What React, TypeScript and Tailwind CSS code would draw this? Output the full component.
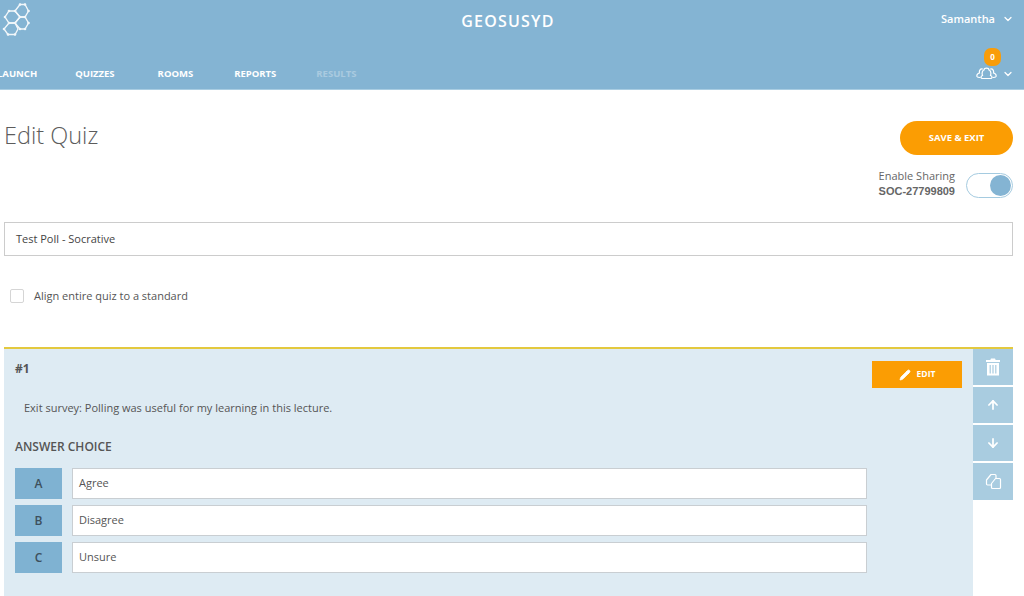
import { ChevronDown, Pencil, ArrowUp, ArrowDown } from "lucide-react";

const Logo = () => (
  <svg width="30" height="38" viewBox="0 0 30 38" fill="none" stroke="white" strokeWidth="1.3" className="opacity-90">
    <path d="M15 11 L20 4.5 L25 4.5 L28.5 11 L25 17 L20 17 Z" />
    <path d="M20 17 L25 17 L28.5 23 L25 29 L20 29 L15 23 Z" />
    <path d="M15 11 L20 17 L15 23 L9 23 L5 17 L9 11 Z" />
    <path d="M9 23 L15 23 L18 29 L15 34.5 L8 34.5 L4 29 Z" />
    {[[20,4.5],[25,4.5],[28.5,11],[28.5,23],[25,17],[20,17],[15,11],[9,11],[5,17],[15,23],[9,23],[4,29],[8,34.5],[15,34.5],[20,29],[25,29]].map(([x, y], i) => (
      <circle key={i} cx={x} cy={y} r="1.3" fill="white" stroke="none" />
    ))}
  </svg>
);

const CloudPeople = () => (
  <svg width="21" height="14" viewBox="0 0 21 14" fill="none" stroke="white" strokeWidth="1.2" strokeLinecap="round">
    <path d="M6.5 12.5 C4.5 12.5 4.5 10 6.5 9.5 C5.5 7 6.5 4.5 8 4 C8 1.5 13 1.5 13 4 C14.5 4.5 15.5 7 14.5 9.5 C16.5 10 16.5 12.5 14.5 12.5 Z" />
    <path d="M6.5 3 C4 2.5 3 5 3.5 7 C1.5 7.5 0.5 9 1 10.5 C1.5 11.5 2.5 11.5 4 11.5" />
    <path d="M14.5 3 C17 2.5 18 5 17.5 7 C19.5 7.5 20.5 9 20 10.5 C19.5 11.5 18.5 11.5 17 11.5" />
  </svg>
);

const TrashIcon = () => (
  <svg width="16" height="18" viewBox="0 0 16 18" fill="white">
    <path d="M6 0.5 H10 L10.7 2 H15 V4 H1 V2 H5.3 Z" />
    <path fillRule="evenodd" d="M2 5 H14 V17.5 H2 Z M4.6 7 V15.5 H5.8 V7 Z M7.4 7 V15.5 H8.6 V7 Z M10.2 7 V15.5 H11.4 V7 Z" />
  </svg>
);

const CopyIcon = () => (
  <svg width="17" height="17" viewBox="0 0 17 17" fill="none" stroke="white" strokeWidth="1.2" strokeLinejoin="round">
    <path d="M6 12 H2.5 C2 12 1.5 11.5 1.5 11 V7 L6 1.5 H10 C10.5 1.5 11 2 11 2.5 V5.5" />
    <path d="M10.5 5.5 H14.5 C15 5.5 15.5 6 15.5 6.5 V14.5 C15.5 15 15 15.5 14.5 15.5 H7.5 C7 15.5 6.5 15 6.5 14.5 V10.5 Z" />
  </svg>
);

const answers = [
  { key: "A", text: "Agree" },
  { key: "B", text: "Disagree" },
  { key: "C", text: "Unsure" },
];

const App = () => {
  return (
    <div className="h-[596px] w-[1024px] overflow-hidden bg-white font-['Open_Sans',sans-serif] text-[#555]">
      <header className="h-[90px] border-b border-[#a9cde2] bg-[#84b4d3] text-white">
        <div className="flex h-[45px] items-start justify-between pr-[10px]">
          <div className="w-[120px]">
            <Logo />
          </div>
          <div className="mt-[9px] ml-[2px] text-[16px] leading-[24px] font-semibold tracking-[1.2px]">GEOSUSYD</div>
          <div className="mt-[10px] flex w-[120px] items-center justify-end gap-[7px] text-[11px] leading-[18px] font-semibold">
            Samantha
            <ChevronDown size={12} strokeWidth={2.5} />
          </div>
        </div>
        <div className="flex h-[44px] items-start justify-between pr-[10px]">
          <nav className="mt-[21px] -ml-[3px] flex gap-[40px] text-[9.5px] leading-[16px] font-bold">
            <span>LAUNCH</span>
            <span className="-ml-[2px]">QUIZZES</span>
            <span className="ml-[3px]">ROOMS</span>
            <span className="ml-[1px]">REPORTS</span>
            <span className="opacity-30">RESULTS</span>
          </nav>
          <div className="relative mt-[20px] flex items-center gap-[5px]">
            <CloudPeople />
            <ChevronDown size={12} strokeWidth={2.5} className="mt-[3px]" />
            <span className="absolute -top-[17px] left-[8px] flex h-[18px] w-[17px] items-center justify-center rounded-[7px] bg-[#f99d0a] text-[8px] font-bold">0</span>
          </div>
        </div>
      </header>

      <main className="pr-[11px] pl-[4px]">
        <div className="flex items-start justify-between pt-[31px]">
          <h1 className="-mt-[1px] text-[23.5px] leading-[30px] font-light text-[#5c5c5c]">Edit Quiz</h1>
          <div className="flex flex-col items-end">
            <button className="h-[34px] w-[113px] rounded-full bg-[#fb9d03] text-[9.5px] font-bold text-white">SAVE &amp; EXIT</button>
            <div className="mt-[16px] flex items-center gap-[11px]">
              <div className="-mt-[3px] text-right">
                <div className="text-[11px] leading-[16px] text-[#666]">Enable Sharing</div>
                <div className="font-['Liberation_Sans',sans-serif] text-[11px] leading-[15px] font-bold text-[#666]">SOC-27799809</div>
              </div>
              <div className="flex h-[25px] w-[47px] items-center justify-end rounded-full border border-[#a5cbe0] bg-white pr-[1px]">
                <span className="h-[21px] w-[21px] rounded-full bg-[#84b4d3]" />
              </div>
            </div>
          </div>
        </div>

        <div className="mt-[23px] flex h-[34px] items-center border border-[#ccc] bg-white px-[11px] text-[11px] text-[#444]">
          Test Poll - Socrative
        </div>

        <label className="mt-[32px] ml-[6px] flex items-center gap-[10px] text-[11px] leading-[16px] text-[#555]">
          <span className="h-[14px] w-[14px] rounded-[2px] border border-[#d5d5d5] bg-white" />
          Align entire quiz to a standard
        </label>

        <section className="mt-[43px] flex h-[300px] border-t-2 border-[#e3c93f]">
          <div className="w-[969px] bg-[#deebf3] pt-[12px] pl-[11px]">
            <div className="flex items-start justify-between pr-[11px]">
              <div className="text-[12px] leading-[16px] font-bold text-[#555]">#1</div>
              <button className="flex h-[27px] w-[90px] items-center justify-center gap-[6px] bg-[#fb9d03] text-[8.5px] font-bold text-white">
                <Pencil size={12} fill="white" strokeWidth={1.5} />
                EDIT
              </button>
            </div>
            <p className="mt-[12px] pl-[9px] text-[11px] leading-[16px] text-[#555]">
              Exit survey: Polling was useful for my learning in this lecture.
            </p>
            <div className="mt-[23px] text-[12px] leading-[16px] font-semibold text-[#555]">ANSWER CHOICE</div>
            <div className="mt-[13px] flex flex-col gap-[6px]">
              {answers.map((a) => (
                <div key={a.key} className="flex gap-[10px]">
                  <div className="flex h-[31px] w-[47px] items-center justify-center bg-[#7fb2d2] text-[12px] font-semibold text-[#3d4f5c]">{a.key}</div>
                  <div className="flex h-[31px] w-[795px] items-center border border-[#c9ced2] bg-white px-[6px] text-[11px] text-[#555]">{a.text}</div>
                </div>
              ))}
            </div>
          </div>
          <div className="flex w-[40px] flex-col gap-[2px] text-white">
            <div className="flex h-[36px] items-center justify-center bg-[#a9cce0]"><TrashIcon /></div>
            <div className="flex h-[36px] items-center justify-center bg-[#a9cce0]"><ArrowUp size={14} strokeWidth={3} /></div>
            <div className="flex h-[36px] items-center justify-center bg-[#a9cce0]"><ArrowDown size={14} strokeWidth={3} /></div>
            <div className="flex h-[37px] items-center justify-center bg-[#a9cce0]"><CopyIcon /></div>
          </div>
        </section>
      </main>
    </div>
  );
};

export default App;
